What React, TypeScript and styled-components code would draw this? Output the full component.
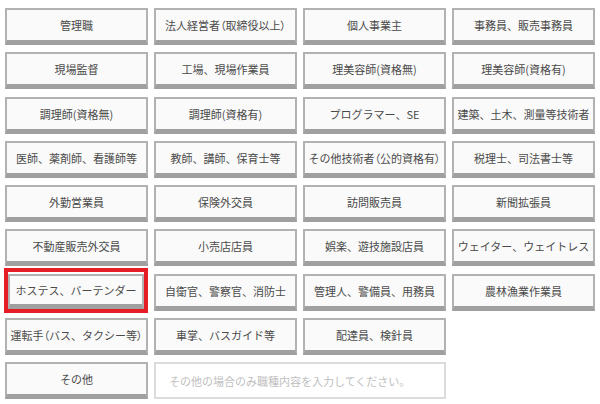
import React from 'react';
import styled, { createGlobalStyle } from 'styled-components';

const GlobalStyle = createGlobalStyle`
  body {
    margin: 0;
    background: #fff;
    font-family: 'Noto Sans CJK JP', 'Noto Sans', sans-serif;
  }
`;

const Grid = styled.div`
  display: grid;
  grid-template-columns: repeat(4, 143px);
  grid-auto-rows: 37px;
  column-gap: 6px;
  row-gap: 7.3px;
  padding: 8px 5px;
`;

const Choice = styled.button`
  box-sizing: border-box;
  display: flex;
  align-items: center;
  justify-content: center;
  width: 100%;
  height: 100%;
  margin: 0;
  padding: 0;
  background: #fafafa;
  border: 2px solid #b2b2b2;
  border-bottom: 5px solid #a0a0a0;
  color: #4a4a4a;
  font-family: 'Noto Sans CJK JP', sans-serif;
  font-size: 11px;
  white-space: nowrap;
  overflow: visible;
  cursor: pointer;
`;

// full-width brackets are set tighter, as in the original
const Paren = styled.span`
  font-feature-settings: 'palt';
`;

const SelectedFrame = styled.div`
  box-sizing: border-box;
  margin: -6px 0 -2px -1px;
  padding-top: 2px;
  border: 4px solid #e51d26;
  display: flex;
`;

const OtherInput = styled.input`
  box-sizing: border-box;
  grid-column: span 2;
  height: 37px;
  margin: 0;
  padding: 0 13px;
  border: 2px solid #dcdcdc;
  background: #fff;
  font-family: 'Noto Sans CJK JP', sans-serif;
  font-size: 11px;
  color: #333;
  outline: none;

  &::placeholder {
    color: #c0c0c0;
  }
`;

const jobs = [
  '管理職',
  '法人経営者（取締役以上）',
  '個人事業主',
  '事務員、販売事務員',
  '現場監督',
  '工場、現場作業員',
  '理美容師(資格無)',
  '理美容師(資格有)',
  '調理師(資格無)',
  '調理師(資格有)',
  'プログラマー、SE',
  '建築、土木、測量等技術者',
  '医師、薬剤師、看護師等',
  '教師、講師、保育士等',
  'その他技術者（公的資格有）',
  '税理士、司法書士等',
  '外勤営業員',
  '保険外交員',
  '訪問販売員',
  '新聞拡張員',
  '不動産販売外交員',
  '小売店店員',
  '娯楽、遊技施設店員',
  'ウェイター、ウェイトレス',
  'ホステス、バーテンダー',
  '自衛官、警察官、消防士',
  '管理人、警備員、用務員',
  '農林漁業作業員',
  '運転手（バス、タクシー等）',
  '車掌、バスガイド等',
  '配達員、検針員',
];

const SELECTED = 'ホステス、バーテンダー';

const renderLabel = (label: string) =>
  label.split(/([（）])/).map((part, i) =>
    part === '（' || part === '）' ? <Paren key={i}>{part}</Paren> : part
  );

const JobChoice: React.FC<{ label: string }> = ({ label }) => {
  if (label === SELECTED) {
    return (
      <SelectedFrame>
        <Choice>{renderLabel(label)}</Choice>
      </SelectedFrame>
    );
  }
  return <Choice>{renderLabel(label)}</Choice>;
};

const App: React.FC = () => (
  <>
    <GlobalStyle />
    <Grid>
      {jobs.map((job) => (
        <JobChoice key={job} label={job} />
      ))}
      <div />
      <Choice>その他</Choice>
      <OtherInput placeholder="その他の場合のみ職種内容を入力してください。" />
    </Grid>
  </>
);

export default App;
